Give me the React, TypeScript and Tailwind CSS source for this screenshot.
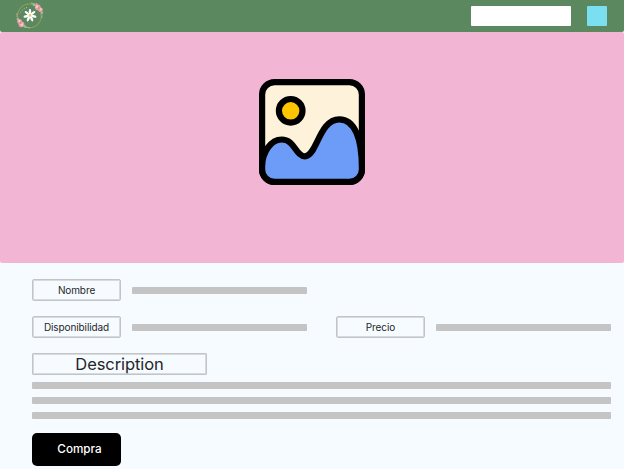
import React from "react";

function Logo() {
  return (
    <svg className="h-8 w-9" viewBox="0 0 36 32" fill="none">
      <circle cx="17.5" cy="15.8" r="12" stroke="#8fa35a" strokeWidth="1" />
      <path d="M8.5 12.5C10 9.5 12.5 8 16 7.2" stroke="#a9c7a0" strokeWidth="1" strokeDasharray="1 1.5" />
      <path d="M19 3l4 1M29 14l1 4M5 13l0 4M13 27l5 1" stroke="#9dbb8e" strokeWidth="1" />
      <path d="M29 15l2 1M4 15l2 1" stroke="#b58078" strokeWidth="1.2" />
      <g fill="#8fc0a0">
        <circle cx="22" cy="5" r="1.3" /><circle cx="30" cy="12.8" r="1.3" />
        <circle cx="5.8" cy="19" r="1.3" /><circle cx="13" cy="26.5" r="1.3" />
      </g>
      <g fill="#e9a0a5">
        <circle cx="25.8" cy="7.3" r="2.9" /><circle cx="28.5" cy="9.8" r="2.4" />
        <circle cx="24.5" cy="4.5" r="1.3" />
        <circle cx="7.5" cy="21.5" r="2.4" /><circle cx="9.5" cy="24.3" r="2.9" />
      </g>
      <g fill="#f7cfce">
        <circle cx="25" cy="6.8" r="1.2" /><circle cx="28.8" cy="9.3" r="1" />
        <circle cx="7.3" cy="21" r="1" /><circle cx="9.8" cy="24.5" r="1.2" />
      </g>
      <g fill="#cf727e">
        <circle cx="26.7" cy="8" r=".8" /><circle cx="8.5" cy="23" r=".8" />
      </g>
      <g fill="#fff">
        <ellipse cx="18" cy="11.8" rx="1.2" ry="3.1" />
        <ellipse cx="18" cy="11.8" rx="1.2" ry="3.1" transform="rotate(51 18 15.4)" />
        <ellipse cx="18" cy="11.8" rx="1.2" ry="3.1" transform="rotate(103 18 15.4)" />
        <ellipse cx="18" cy="11.8" rx="1.2" ry="3.1" transform="rotate(154 18 15.4)" />
        <ellipse cx="18" cy="11.8" rx="1.2" ry="3.1" transform="rotate(206 18 15.4)" />
        <ellipse cx="18" cy="11.8" rx="1.2" ry="3.1" transform="rotate(257 18 15.4)" />
        <ellipse cx="18" cy="11.8" rx="1.2" ry="3.1" transform="rotate(309 18 15.4)" />
      </g>
      <circle cx="18" cy="15.4" r="1.3" fill="#edc681" />
    </svg>
  );
}

function PictureIcon() {
  return (
    <svg className="size-[106px]" viewBox="0 0 106 106" stroke="#000" strokeWidth="6.2">
      <rect x="3.1" y="3.1" width="99.8" height="99.8" rx="12.5" fill="#fff2da" />
      <path
        d="M3.1 88C3.1 73 12 60.5 22.7 60.5C36 60.5 36.5 77.3 46 77.3C58 77.3 60 40.3 80.3 40.3C96 40.3 102.9 60 102.9 89V90.4A12.5 12.5 0 0 1 90.4 102.9H15.6A12.5 12.5 0 0 1 3.1 90.4Z"
        fill="#6c9cf8"
      />
      <circle cx="31.7" cy="31.8" r="11.8" fill="#ffc600" />
    </svg>
  );
}

function Label({ children }: { children: string }) {
  return (
    <div className="flex h-[22px] w-[89px] shrink-0 items-center justify-center rounded-xs border border-[#c4c4c4] text-[10px] leading-[12px] tracking-[-0.01em] inset-ring-1 inset-ring-[#d8dbde]">
      {children}
    </div>
  );
}

function Field({ label }: { label: string }) {
  return (
    <div className="flex items-center gap-[11px]">
      <Label>{label}</Label>
      <div className="h-[7px] w-[175px] rounded-[1px] bg-[#c4c4c4]" />
    </div>
  );
}

export default function App() {
  return (
    <div className="h-[469px] w-[624px] overflow-hidden bg-[#f6fbff] font-['Inter',sans-serif] text-[#242629]">
      <header className="flex h-8 items-center rounded-b-[2px] bg-[#5c8860] pr-[17px] pl-3">
        <Logo />
        <div className="ml-auto h-5 w-[100px] rounded-[1px] bg-white" />
        <div className="ml-4 size-5 rounded-[1px] bg-[#7bdff2]" />
      </header>
      <section className="flex h-[231px] justify-center rounded-[2px] bg-[#f2b5d4] pt-[47px]">
        <PictureIcon />
      </section>
      <main className="flex flex-col pt-4 pr-[13px] pl-8">
        <Field label="Nombre" />
        <div className="mt-[15px] flex justify-between">
          <Field label="Disponibilidad" />
          <Field label="Precio" />
        </div>
        <div className="mt-[15px] flex h-[22px] w-[175px] items-center justify-center rounded-[1px] border border-[#c4c4c4] text-[16.5px] leading-[20px] tracking-[-0.005em] inset-ring-1 inset-ring-[#d8dbde]">
          Description
        </div>
        <div className="mt-[7px] flex flex-col gap-[8px]">
          <div className="h-[7px] rounded-[1px] bg-[#c4c4c4]" />
          <div className="h-[7px] rounded-[1px] bg-[#c4c4c4]" />
          <div className="h-[7px] rounded-[1px] bg-[#c4c4c4]" />
        </div>
        <button className="mt-[14px] h-[33px] w-[89px] rounded-[5px] bg-black pt-px pl-[6px] text-[11.7px] font-medium text-white">
          Compra
        </button>
      </main>
    </div>
  );
}
